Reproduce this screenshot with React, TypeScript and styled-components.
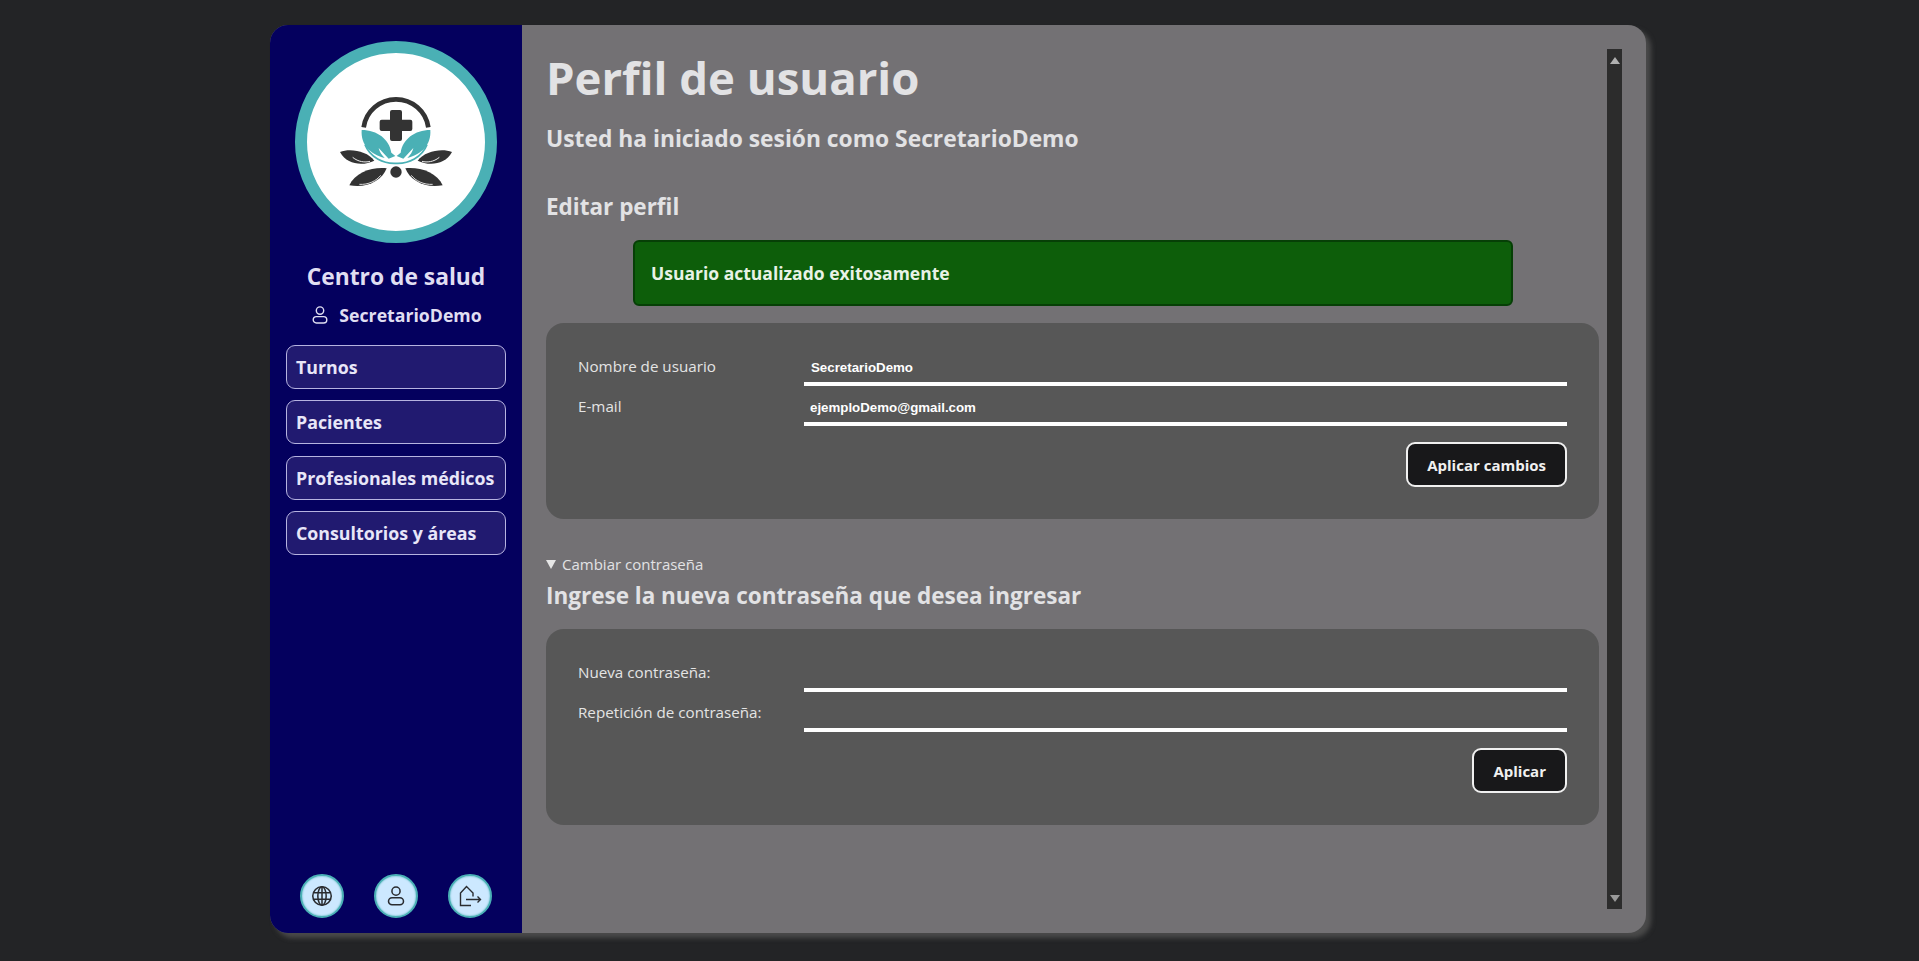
import React from "react";
import styled, { createGlobalStyle } from "styled-components";

const Global = createGlobalStyle`
  html, body { margin: 0; padding: 0; height: 100%; background: #232426; }
  body { font-family: "Open Sans", "Noto Sans", sans-serif; overflow: hidden; }
  * { box-sizing: border-box; }
`;

const Page = styled.div`
  width: 1919px;
  height: 961px;
  padding: 25px 0 0 270px;
`;

const Card = styled.div`
  display: flex;
  width: 1376px;
  height: 908px;
  border-radius: 18px;
  background: #737174;
  box-shadow: 5px 5px 5px #4a4a4a;
`;

const Sidebar = styled.aside`
  flex: 0 0 252px;
  display: flex;
  flex-direction: column;
  align-items: center;
  background: #04005e;
  border-radius: 18px 0 0 18px;
  padding: 16px 16px 15px;
  color: #e0def2;
`;

const LogoRing = styled.div`
  width: 202px;
  height: 202px;
  border-radius: 50%;
  border: 12px solid #4ab0b5;
  background: #fff;
  display: flex;
  align-items: center;
  justify-content: center;
`;

const Brand = styled.div`
  margin-top: 19px;
  font-size: 22.8px;
  line-height: 30px;
  font-weight: 700;
`;

const UserLine = styled.div`
  display: flex;
  align-items: center;
  gap: 9px;
  margin-top: 11px;
  font-size: 17.7px;
  line-height: 24px;
  font-weight: 700;
`;

const Nav = styled.nav`
  display: flex;
  flex-direction: column;
  gap: 11.4px;
  width: 220px;
  margin-top: 18px;
`;

const NavItem = styled.a`
  display: flex;
  align-items: center;
  height: 44px;
  padding: 0 9px;
  border: 1px solid #b6b3e0;
  border-radius: 9px;
  background: #211a70;
  color: #e8e6f8;
  font-size: 17.8px;
  font-weight: 700;
  white-space: nowrap;
`;

const BottomIcons = styled.div`
  margin-top: auto;
  display: flex;
  gap: 30px;
`;

const RoundIcon = styled.button`
  width: 44px;
  height: 44px;
  padding: 0;
  border-radius: 50%;
  border: 2px solid #4ab0b5;
  background: #cce8ff;
  box-shadow: inset 0 0 2px #4ab0b5;
  display: flex;
  align-items: center;
  justify-content: center;
  color: #2a2c30;
`;

const Main = styled.main`
  flex: 1;
  display: flex;
  min-width: 0;
  padding: 24px 24px 24px 24px;
`;

const Content = styled.div`
  flex: 0 0 1053px;
  color: #e2e2e4;
`;

const Title = styled.h1`
  margin: -1px 0 0;
  font-size: 45.5px;
  line-height: 58px;
  font-weight: 700;
`;

const Subtitle = styled.h2`
  margin: 17px 0 0;
  font-size: 22.8px;
  line-height: 32px;
  font-weight: 700;
`;

const SectionTitle = styled.h3`
  margin: 5px 0 0;
  font-size: 22.5px;
  line-height: 32px;
  font-weight: 700;
`;

const EditTitle = styled(SectionTitle)`
  margin-top: 36px;
`;

const Alert = styled.div`
  width: 880px;
  height: 66px;
  margin: 17px 0 0 87px;
  display: flex;
  align-items: center;
  padding: 0 16px;
  border: 2px solid #063f06;
  border-radius: 6px;
  background: #0d5e0a;
  color: #e8f2e6;
  font-size: 17.5px;
  font-weight: 700;
`;

const Panel = styled.form<{ $top: number }>`
  margin-top: ${(p) => p.$top}px;
  height: 196px;
  padding: 28px 32px 0;
  border-radius: 18px;
  background: #575757;
  display: flex;
  flex-direction: column;
`;

const FieldRow = styled.label`
  display: grid;
  grid-template-columns: 226px 1fr;
  height: 40px;
  font-size: 15.2px;
  line-height: 22px;
  color: #e4e4e4;
`;

const FieldLabel = styled.span`
  padding-top: 4px;
`;

const FieldInput = styled.input<{ $indent?: number }>`
  width: 763px;
  height: 35px;
  padding: 1px 0 0 ${(p) => p.$indent ?? 7}px;
  background: transparent;
  border: 0;
  border-bottom: 4px solid #fff;
  outline: none;
  color: #fff;
  font-family: "Liberation Sans", Arial, sans-serif;
  font-size: 13.3px;
  font-weight: 700;
`;

const Actions = styled.div`
  margin-top: 11px;
  display: flex;
  justify-content: flex-end;
`;

const ActionButton = styled.button`
  height: 45px;
  padding: 0 19px;
  border: 2px solid #f0f0f0;
  border-radius: 9px;
  background: #18181a;
  color: #f0f0f0;
  font-family: "Open Sans", "Noto Sans", sans-serif;
  font-size: 15px;
  font-weight: 700;
`;

const Summary = styled.div`
  display: flex;
  align-items: center;
  gap: 6px;
  margin-top: 34px;
  font-size: 15px;
  line-height: 22px;
  color: #e2e2e4;
`;

const Caret = styled.span`
  width: 0;
  height: 0;
  border-left: 5.5px solid transparent;
  border-right: 5.5px solid transparent;
  border-top: 9px solid #e6e6e6;
`;

const Scrollbar = styled.div`
  flex: 0 0 15px;
  margin-left: 8px;
  display: flex;
  flex-direction: column;
  justify-content: space-between;
  align-items: center;
  padding: 8px 0 7px;
  background: #2c2c2c;
`;

const Arrow = styled.span<{ $down?: boolean; $dim?: boolean }>`
  width: 0;
  height: 0;
  border-left: 5px solid transparent;
  border-right: 5px solid transparent;
  ${(p) =>
    p.$down
      ? `border-top: 7px solid ${p.$dim ? "#9a9a9a" : "#b0b0b0"};`
      : `border-bottom: 7px solid #b0b0b0;`}
`;

const LogoHalf = () => (
  <>
    <path d="M125 180 C172 180 208 208 214 248 L226 258 L206 266 L176 234 C178 246 186 256 194 264 C150 252 122 224 125 180Z" fill="#4ab0b5" />
    <path d="M135 224 C150 262 190 282 228 280" fill="none" stroke="#4ab0b5" strokeWidth="5" />
    <path d="M60 246 C92 234 142 244 163 272 C130 288 82 286 60 246Z" fill="#333" />
    <path d="M98 262 C115 276 135 278 150 274" fill="none" stroke="#eee" strokeWidth="3" />
    <path d="M88 346 C105 306 160 290 200 295 C186 332 140 356 88 346Z" fill="#333" />
    <path d="M118 343 C145 345 170 332 182 316" fill="none" stroke="#ddd" strokeWidth="3" />
  </>
);

const Logo = () => (
  <svg width="150" height="130" viewBox="3 21 450 390" aria-hidden="true">
    <path d="M131 172 A98 98 0 0 1 325 172" fill="none" stroke="#333" strokeWidth="14" />
    <path d="M216 120h24a6 6 0 0 1 6 6v23h25a6 6 0 0 1 6 6v22a6 6 0 0 1-6 6h-25v24a6 6 0 0 1-6 6h-24a6 6 0 0 1-6-6v-24h-25a6 6 0 0 1-6-6v-22a6 6 0 0 1 6-6h25v-23a6 6 0 0 1 6-6z" fill="#333" />
    <LogoHalf />
    <g transform="matrix(-1 0 0 1 456 0)">
      <LogoHalf />
    </g>
    <circle cx="228" cy="306" r="17" fill="#333" />
  </svg>
);

const PersonIcon = ({ size = 20 }: { size?: number }) => (
  <svg width={size} height={size} viewBox="0 0 20 20" fill="none" stroke="currentColor" strokeWidth="1.4" aria-hidden="true">
    <circle cx="10" cy="5.6" r="3.7" />
    <rect x="3.2" y="11.6" width="13.6" height="6.4" rx="3.2" />
  </svg>
);

const GlobeIcon = () => (
  <svg width="22" height="22" viewBox="0 0 20 20" fill="none" stroke="currentColor" strokeWidth="1.4" aria-hidden="true">
    <circle cx="10" cy="10" r="8.4" />
    <ellipse cx="10" cy="10" rx="3.8" ry="8.4" />
    <path d="M2.4 7h15.2M2.4 13h15.2M10 1.6v16.8" />
  </svg>
);

const HouseExitIcon = () => (
  <svg width="24" height="24" viewBox="0 0 24 24" fill="none" stroke="currentColor" strokeWidth="1.4" aria-hidden="true">
    <path d="M13 21.5H2.5V9L8.5 2.5l6.5 6.5v3.5" />
    <path d="M8 15.5h14.5M19.5 12.5l3 3-3 3" />
  </svg>
);

const NAV = ["Turnos", "Pacientes", "Profesionales médicos", "Consultorios y áreas"];

export default function App() {
  return (
    <Page>
      <Global />
      <Card>
        <Sidebar>
          <LogoRing>
            <Logo />
          </LogoRing>
          <Brand>Centro de salud</Brand>
          <UserLine>
            <PersonIcon />
            SecretarioDemo
          </UserLine>
          <Nav>
            {NAV.map((n) => (
              <NavItem key={n}>{n}</NavItem>
            ))}
          </Nav>
          <BottomIcons>
            <RoundIcon><GlobeIcon /></RoundIcon>
            <RoundIcon><PersonIcon size={22} /></RoundIcon>
            <RoundIcon><HouseExitIcon /></RoundIcon>
          </BottomIcons>
        </Sidebar>
        <Main>
          <Content>
            <Title>Perfil de usuario</Title>
            <Subtitle>Usted ha iniciado sesión como SecretarioDemo</Subtitle>
            <EditTitle>Editar perfil</EditTitle>
            <Alert>Usuario actualizado exitosamente</Alert>
            <Panel $top={17}>
              <FieldRow>
                <FieldLabel>Nombre de usuario</FieldLabel>
                <FieldInput defaultValue="SecretarioDemo" />
              </FieldRow>
              <FieldRow>
                <FieldLabel>E-mail</FieldLabel>
                <FieldInput defaultValue="ejemploDemo@gmail.com" $indent={6} />
              </FieldRow>
              <Actions>
                <ActionButton type="button">Aplicar cambios</ActionButton>
              </Actions>
            </Panel>
            <Summary>
              <Caret />
              Cambiar contraseña
            </Summary>
            <SectionTitle>Ingrese la nueva contraseña que desea ingresar</SectionTitle>
            <Panel $top={17}>
              <FieldRow>
                <FieldLabel>Nueva contraseña:</FieldLabel>
                <FieldInput type="password" />
              </FieldRow>
              <FieldRow>
                <FieldLabel>Repetición de contraseña:</FieldLabel>
                <FieldInput type="password" />
              </FieldRow>
              <Actions>
                <ActionButton type="button">Aplicar</ActionButton>
              </Actions>
            </Panel>
          </Content>
          <Scrollbar>
            <Arrow />
            <Arrow $down $dim />
          </Scrollbar>
        </Main>
      </Card>
    </Page>
  );
}
